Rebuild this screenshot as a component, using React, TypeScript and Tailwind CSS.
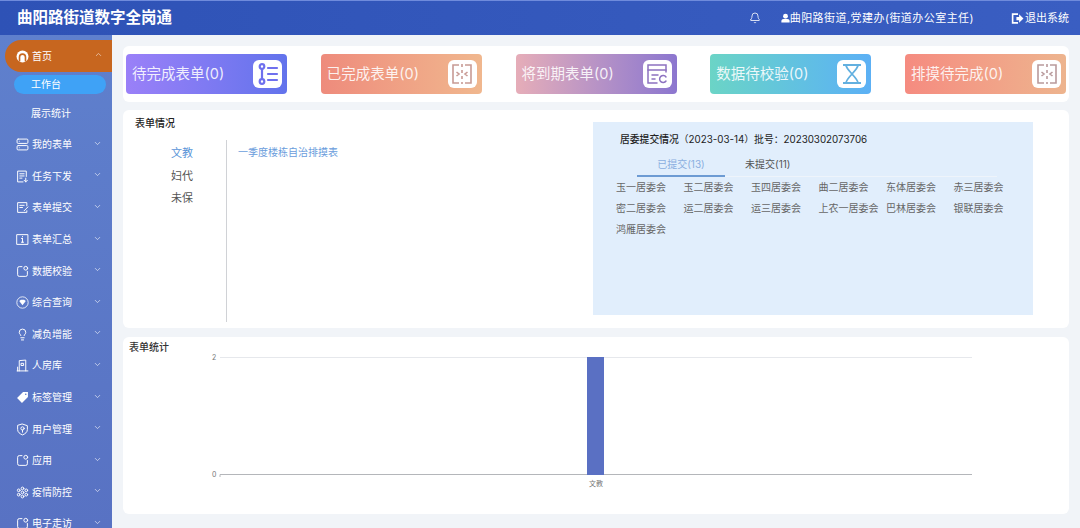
import React from 'react';
import { ChevronDown, ChevronUp, Bell, Lightbulb, Server } from 'lucide-react';

const fontStack = { fontFamily: 'Inter, "Noto Sans CJK SC", sans-serif' };

const Outline: React.FC<{ children: React.ReactNode; className?: string }> = ({ children, className }) => (
  <svg viewBox="0 0 24 24" fill="none" stroke="currentColor" strokeWidth={1.8} strokeLinecap="round" strokeLinejoin="round" className={className ?? 'w-[13px] h-[13px]'}>
    {children}
  </svg>
);

const HomeIcon = () => (
  <svg viewBox="0 0 24 24" className="w-[13px] h-[13px]">
    <circle cx="12" cy="12" r="11" fill="#fff" />
    <path d="M5 21v-8a7 7 0 0 1 14 0v8h-3v-8a4 4 0 0 0-8 0v8z" fill="#c9681f" />
  </svg>
);
const TaskIcon = () => (
  <Outline>
    <path d="M19 12V2H3v20h10" />
    <path d="M7 7h8M7 11h8M7 15h4" />
    <path d="M18 15v7M15 19l3 3 3-3" />
  </Outline>
);
const SubmitIcon = () => (
  <Outline>
    <path d="M20 9V3H3v18h17v-3" />
    <path d="M7 8h8M7 12h5" />
    <path d="M22 11l-7 7" />
  </Outline>
);
const InfoIcon = () => (
  <Outline>
    <rect x="2" y="3" width="20" height="18" />
    <path d="M12 10v7M10 17h4M10 10h2M12 6.5v.5" />
  </Outline>
);
const AppIcon = () => (
  <Outline>
    <path d="M11 3H6a3 3 0 0 0-3 3v12a3 3 0 0 0 3 3h12a3 3 0 0 0 3-3v-6" />
    <circle cx="18" cy="6" r="3.5" />
  </Outline>
);
const QueryIcon = () => (
  <svg viewBox="0 0 24 24" className="w-[13px] h-[13px]">
    <circle cx="12" cy="12" r="10.5" fill="none" stroke="#fff" strokeWidth="1.5" />
    <path d="M6 9l3-2h6l3 2-6 8z" fill="#fff" />
  </svg>
);
const BuildingIcon = () => (
  <Outline>
    <path d="M2 22h20M6 22V3l12-1v20" />
    <path d="M3 15v7M10 8h4v4h-4z" />
  </Outline>
);
const TagIcon = () => (
  <svg viewBox="0 0 24 24" className="w-[13px] h-[13px]">
    <path d="M13 2h9v9L11 22 2 13z" fill="#fff" />
    <circle cx="18" cy="6" r="1.5" fill="#5a75c4" />
  </svg>
);
const ShieldIcon = () => (
  <Outline>
    <path d="M12 2l9 3v7c0 5-4 8-9 10-5-2-9-5-9-10V5z" />
    <circle cx="12" cy="10" r="3" />
    <path d="M12 13v4" />
  </Outline>
);
const VirusIcon = () => (
  <Outline>
    <circle cx="12" cy="12" r="2.5" />
    <circle cx="12" cy="4.5" r="2.5" />
    <circle cx="12" cy="19.5" r="2.5" />
    <circle cx="5" cy="8" r="2.5" />
    <circle cx="19" cy="8" r="2.5" />
    <circle cx="5" cy="16" r="2.5" />
    <circle cx="19" cy="16" r="2.5" />
  </Outline>
);

const menuItems: { label: string; icon: React.ReactNode }[] = [
  { label: '我的表单', icon: <Server className="w-[13px] h-[13px]" strokeWidth={1.8} /> },
  { label: '任务下发', icon: <TaskIcon /> },
  { label: '表单提交', icon: <SubmitIcon /> },
  { label: '表单汇总', icon: <InfoIcon /> },
  { label: '数据校验', icon: <AppIcon /> },
  { label: '综合查询', icon: <QueryIcon /> },
  { label: '减负增能', icon: <Lightbulb className="w-[13px] h-[13px]" strokeWidth={1.8} /> },
  { label: '人房库', icon: <BuildingIcon /> },
  { label: '标签管理', icon: <TagIcon /> },
  { label: '用户管理', icon: <ShieldIcon /> },
  { label: '应用', icon: <AppIcon /> },
  { label: '疫情防控', icon: <VirusIcon /> },
  { label: '电子走访', icon: <AppIcon /> },
];

const ListIcon = () => (
  <svg viewBox="0 0 24 24" fill="none" stroke="#6f70ee" strokeWidth="2.2" strokeLinecap="round" className="w-[24px] h-[24px]">
    <circle cx="6" cy="4.5" r="2.3" />
    <circle cx="6" cy="19.5" r="2.3" />
    <path d="M6 7v10M12 6h9M12 12h9M12 18h9" />
  </svg>
);
const SplitIcon: React.FC<{ color: string }> = ({ color }) => (
  <svg viewBox="0 0 24 24" fill="none" stroke={color} strokeWidth="1.6" className="w-[24px] h-[24px]">
    <path d="M9 3H3v18h6M15 3h6v18h-6" />
    <path d="M12 2v3M12 8v3M12 14v3M12 20v2" />
    <path d="M6.5 10l2.5 2-2.5 2M17.5 10L15 12l2.5 2" />
  </svg>
);
const FormIcon = () => (
  <svg viewBox="0 0 24 24" fill="none" stroke="#8d72c0" strokeWidth="1.5" strokeLinecap="round" className="w-[24px] h-[24px]">
    <path d="M21 10V3H3v18h9" />
    <path d="M3 8h18M7 13h6M7 17h3" />
    <path d="M21 15a3.5 3.5 0 1 0 0 4" />
  </svg>
);
const HourglassIcon = () => (
  <svg viewBox="0 0 24 24" fill="none" stroke="#62b0e0" strokeWidth="1.8" strokeLinejoin="round" className="w-[24px] h-[24px]">
    <path d="M3 3h18M3 21h18M6 3c0 5 12 13 12 18M18 3c0 5-12 13-12 18" />
  </svg>
);

const statCards = [
  { label: '待完成表单(0)', bg: 'bg-gradient-to-r from-[#9a80f8] to-[#6273ec]', icon: <ListIcon /> },
  { label: '已完成表单(0)', bg: 'bg-gradient-to-r from-[#ee8b7c] to-[#f0b78e]', icon: <SplitIcon color="#c89a94" /> },
  { label: '将到期表单(0)', bg: 'bg-gradient-to-r from-[#e6adb8] to-[#8c76cf]', icon: <FormIcon /> },
  { label: '数据待校验(0)', bg: 'bg-gradient-to-r from-[#6bd4c6] to-[#5cb0f5]', icon: <HourglassIcon /> },
  { label: '排摸待完成(0)', bg: 'bg-gradient-to-r from-[#f58b80] to-[#edb48e]', icon: <SplitIcon color="#b99a9c" /> },
];

const committees = [
  '玉一居委会', '玉二居委会', '玉四居委会', '曲二居委会', '东体居委会', '赤三居委会',
  '密二居委会', '运二居委会', '运三居委会', '上农一居委会', '巴林居委会', '银联居委会',
  '鸿雁居委会',
];

export default function App() {
  return (
    <div className="w-[1080px] h-[528px] overflow-hidden flex flex-col bg-[#f1f4f8]" style={fontStack}>
      {/* Header */}
      <header className="h-[35px] shrink-0 flex items-center text-white border-t border-[#6f8bdc] bg-gradient-to-r from-[#2e52b6] to-[#3a5ec2]">
        <h1 className="ml-[17px] text-[15.5px] font-bold whitespace-nowrap">曲阳路街道数字全岗通</h1>
        <div className="ml-auto flex items-center pr-[11px] text-[11px] whitespace-nowrap">
          <Bell className="w-[12px] h-[12px]" strokeWidth={1.6} />
          <svg viewBox="0 0 24 24" fill="#fff" className="ml-[20px] w-[9px] h-[10px]">
            <circle cx="12" cy="7" r="6.5" />
            <path d="M1 24v-4c0-4 4-6 11-6s11 2 11 6v4z" />
          </svg>
          <span className="tracking-[0.45px]">曲阳路街道,党建办(街道办公室主任)</span>
          <svg viewBox="0 0 24 24" fill="none" className="ml-[37px] w-[13px] h-[13px]">
            <path d="M13 4H3v16h10" stroke="#fff" strokeWidth="3" />
            <path d="M10 9h5V4l8 8-8 8v-5h-5z" fill="#fff" />
          </svg>
          <span className="ml-[1px]">退出系统</span>
        </div>
      </header>

      <div className="flex-1 flex min-h-0">
        {/* Sidebar */}
        <aside className="w-[112px] shrink-0 overflow-hidden pt-[5px] text-white text-[10px] bg-gradient-to-b from-[#5f80cd] to-[#5872c3]">
          <div className="ml-[5px] h-[32px] flex items-center pl-[11px] pr-[9px] rounded-l-full bg-[#c7661f]">
            <HomeIcon />
            <span className="ml-[3px]">首页</span>
            <ChevronUp className="ml-auto -mt-[3px] w-[9px] h-[9px] opacity-70" />
          </div>
          <div className="ml-[14px] mr-[6px] mt-[3px] h-[19px] flex items-center pl-[17px] rounded-full bg-[#3fa2f6]">工作台</div>
          <div className="mt-[9px] h-[20px] flex items-center pl-[31px]">展示统计</div>
          <div className="mt-[6px]">
            {menuItems.map((item) => (
              <div key={item.label} className="h-[31.6px] flex items-center pl-[16px] pr-[10px]">
                {item.icon}
                <span className="ml-[3px] whitespace-nowrap">{item.label}</span>
                <ChevronDown className="ml-auto -mt-[3px] w-[9px] h-[9px] opacity-80" />
              </div>
            ))}
          </div>
        </aside>

        {/* Main */}
        <main className="flex-1 min-w-0 pt-[11px] px-[11px] flex flex-col">
          <section className="h-[56px] rounded-md bg-white px-[3px] flex items-center justify-between">
            {statCards.map((card) => (
              <div key={card.label} className={`w-[161px] h-[40px] rounded-[4px] flex items-center justify-between pl-[6px] pr-[5px] text-[#ffffffe0] text-[14.5px] ${card.bg}`}>
                <span className="whitespace-nowrap">{card.label}</span>
                <span className="w-[29px] h-[28px] rounded-md bg-white flex items-center justify-center">{card.icon}</span>
              </div>
            ))}
          </section>

          <section className="mt-[8px] h-[218px] rounded-md bg-white flex">
            <div className="w-[470px] shrink-0 pl-[12px] pt-[5px]">
              <h2 className="h-[16px] leading-[16px] text-[10px] font-medium text-[#222]">表单情况</h2>
              <div className="mt-[9px] flex">
                <ul className="w-[92px] h-[182px] pl-[36px] pt-[2px] border-r-[1.5px] border-[#d0d2d6] text-[11px] text-[#555]">
                  <li className="h-[22.5px] leading-[22px] text-[#5a94d8]">文教</li>
                  <li className="h-[22.5px] leading-[22px]">妇代</li>
                  <li className="h-[22.5px] leading-[22px]">未保</li>
                </ul>
                <p className="ml-[11px] mt-[2px] text-[10px] leading-[20px] text-[#6a9cdc]">一季度楼栋自治排摸表</p>
              </div>
            </div>

            <div className="mt-[12px] w-[440px] h-[193px] bg-[#e1eefc] pl-[23px] pt-[10px]">
              <p className="ml-[4px] h-[16px] leading-[16px] text-[9.8px] text-[#222] whitespace-nowrap">
                <span className="font-medium">居委提交情况</span>（2023-03-14）批号：20230302073706
              </p>
              <div className="ml-[21px] mt-[5px] w-[360px] h-[24px] flex border-b border-[#eef4fb] text-[10px]">
                <div className="w-[88px] h-[24px] text-center leading-[22px] text-[#8aaee0] border-b-2 border-[#6d9bd3]">已提交(13)</div>
                <div className="ml-[20px] leading-[22px] text-[#555]">未提交(11)</div>
              </div>
              <div className="grid grid-cols-[repeat(6,67.5px)] auto-rows-[21px] items-center text-[10px] text-[#666] whitespace-nowrap">
                {committees.map((name) => (
                  <span key={name}>{name}</span>
                ))}
              </div>
            </div>
          </section>

          <section className="mt-[9px] h-[177px] rounded-md bg-white">
            <h2 className="pl-[6px] pt-[3px] h-[17px] leading-[14px] text-[10px] font-medium text-[#333]">表单统计</h2>
            <svg width="946" height="160" className="block">
              <line x1="97" y1="3.5" x2="849" y2="3.5" stroke="#e6e8ec" />
              <line x1="97" y1="120.5" x2="849" y2="120.5" stroke="#b4b6ba" />
              <line x1="97" y1="120.5" x2="97" y2="123" stroke="#b4b6ba" />
              <rect x="464" y="3" width="17" height="118" fill="#5a70c3" />
              <text x="89" y="6" fontSize="7" fill="#777">2</text>
              <text x="89" y="123" fontSize="7" fill="#777">0</text>
              <text x="473" y="132" fontSize="7" fill="#777" textAnchor="middle">文教</text>
            </svg>
          </section>
        </main>
      </div>
    </div>
  );
}
